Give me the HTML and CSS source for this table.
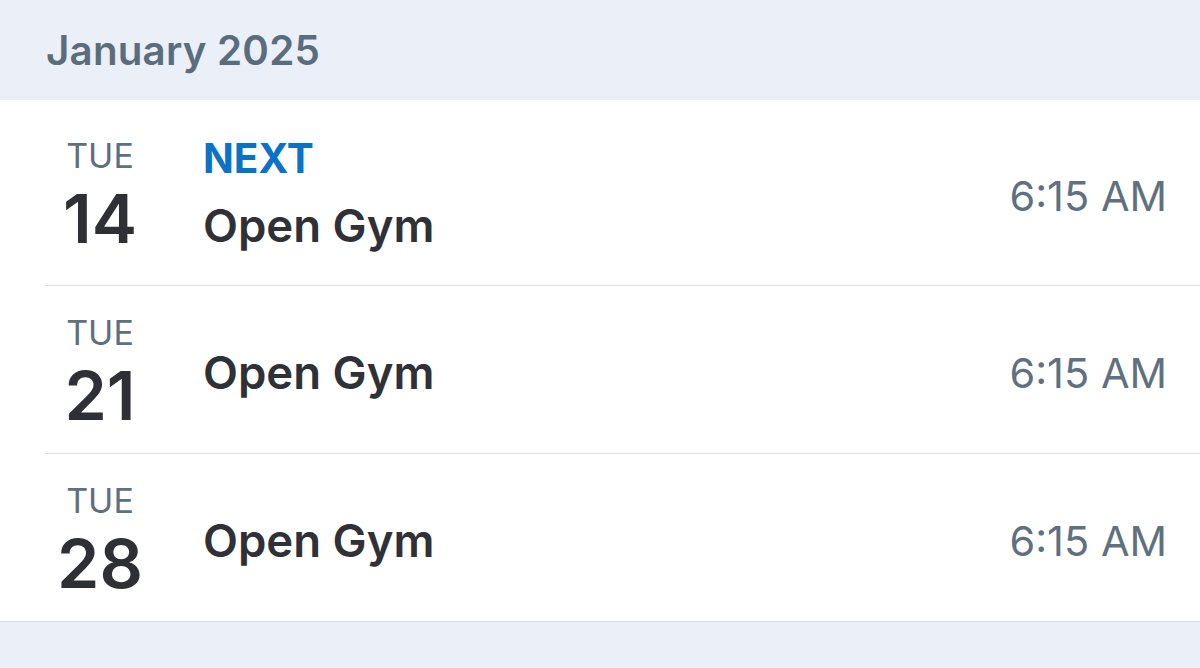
FILE: index.html
```html
<!DOCTYPE html>
<html lang="en">
<head>
<meta charset="utf-8">
<title>Schedule</title>
<link rel="stylesheet" href="styles.css">
</head>
<body>
<div class="page">
  <header class="month">January 2025</header>
  <ul class="list">
    <li class="row row-next">
      <div class="date"><span class="dow">TUE</span><span class="day">14</span></div>
      <div class="info"><span class="badge">NEXT</span><span class="title">Open Gym</span></div>
      <div class="time">6:15 AM</div>
    </li>
    <li class="row">
      <div class="date"><span class="dow">TUE</span><span class="day">21</span></div>
      <div class="info"><span class="title">Open Gym</span></div>
      <div class="time">6:15 AM</div>
    </li>
    <li class="row row-last">
      <div class="date"><span class="dow">TUE</span><span class="day">28</span></div>
      <div class="info"><span class="title">Open Gym</span></div>
      <div class="time">6:15 AM</div>
    </li>
  </ul>
</div>
</body>
</html>
```
FILE: styles.css
```css
* { box-sizing: border-box; }
html, body { margin: 0; padding: 0; }
body {
  background: #ebeff8;
  font-family: Inter, "Noto Sans", "Liberation Sans", sans-serif;
  width: 1200px;
  height: 668px;
  overflow: hidden;
}
.month {
  height: 100px;
  padding: 27px 0 0 46px;
  font-size: 40.3px;
  font-weight: 600;
  color: #5a6d7d;
  line-height: 48px;
  letter-spacing: 0.2px;
}
.list {
  list-style: none;
  margin: 0;
  padding: 0 0 0 45px;
  background: #fff;
  border-bottom: 1px solid #d6dce7;
}
.row {
  display: flex;
  align-items: center;
  padding: 24px 35px 18px 0;
  border-bottom: 1px solid #dcdfe4;
}
.row-last { border-bottom: none; }
.date {
  width: 110px;
  display: flex;
  flex-direction: column;
  align-items: center;
}
.dow {
  font-size: 34px;
  line-height: 46px;
  color: #5e6f7e;
  font-weight: 400;
}
.day {
  font-size: 68px;
  line-height: 79px;
  font-weight: 600;
  color: #2e3035;
}
.info {
  flex: 1;
  margin-left: 48px;
  display: flex;
  flex-direction: column;
}
.row-next .info { padding-top: 10px; }
.badge {
  font-size: 40.5px;
  font-weight: 700;
  color: #0b72c6;
  line-height: 50px;
}
.title {
  font-size: 45.5px;
  font-weight: 600;
  color: #2f3136;
  line-height: 60px;
}
.row-next .title { line-height: 83px; }
.time {
  font-size: 41.5px;
  color: #5f7080;
  font-weight: 400;
  margin-right: -2px;
}
```
